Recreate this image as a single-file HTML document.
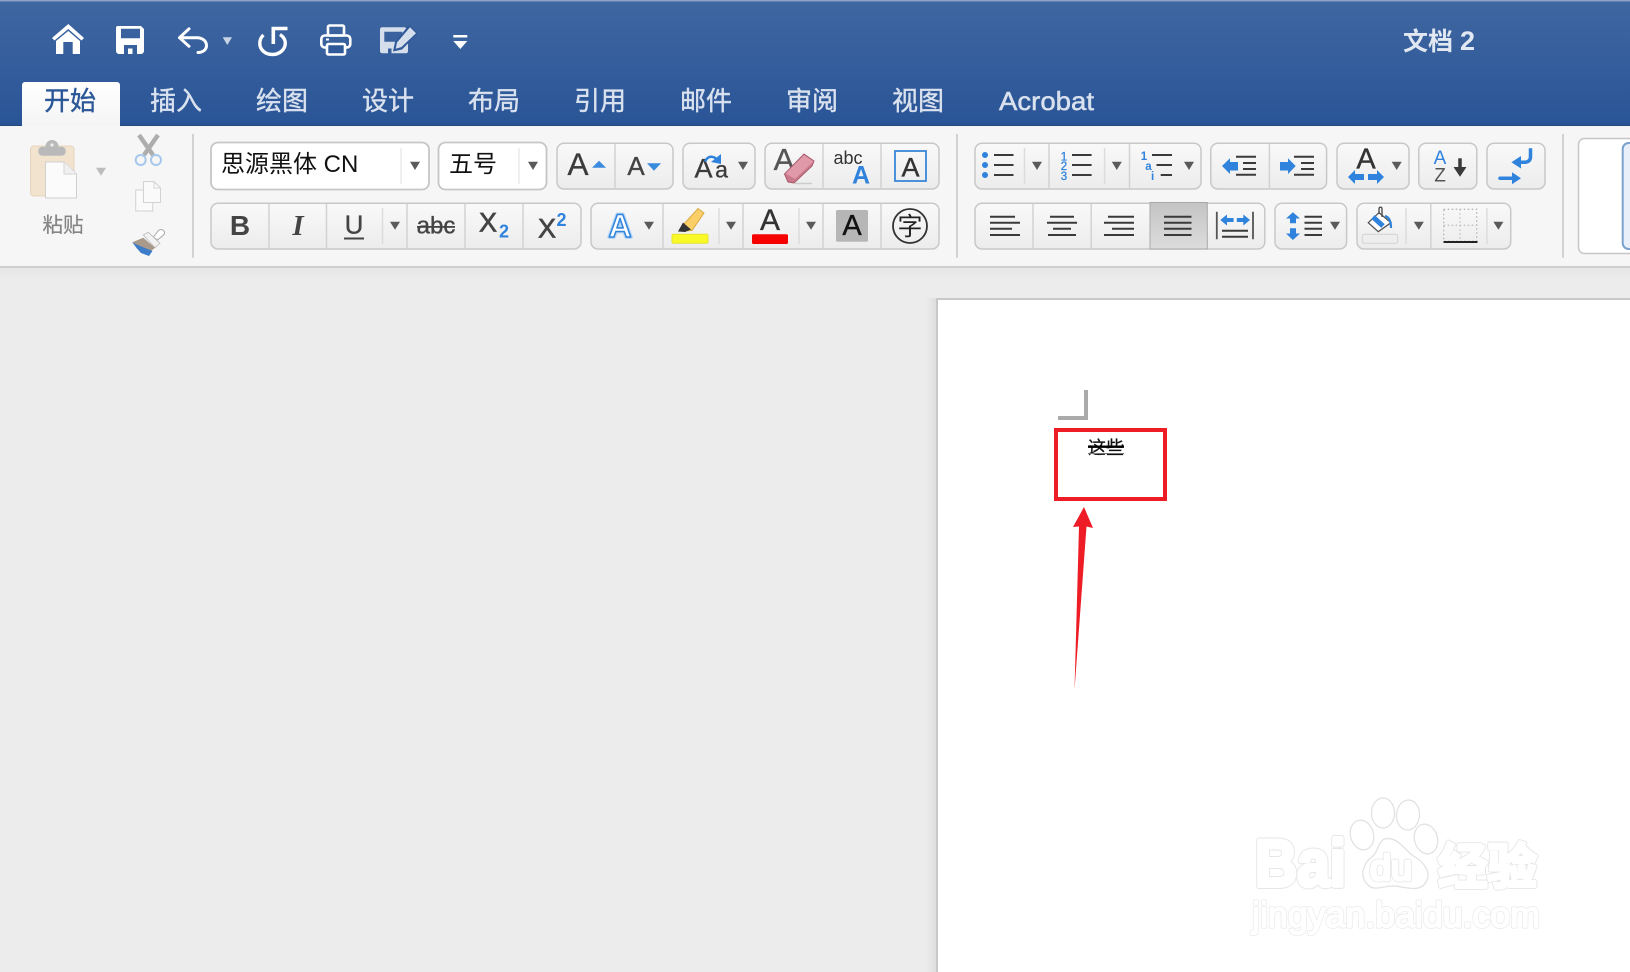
<!DOCTYPE html>
<html lang="zh"><head><meta charset="utf-8"><title>文档2</title>
<style>
html,body{margin:0;padding:0;background:#ececec;width:1630px;height:972px;overflow:hidden}
svg{display:block}
text{font-family:"Liberation Sans","Noto Sans CJK SC",sans-serif}
.m{text-anchor:middle}
.tab{font-size:26px;fill:#d9e1ee;stroke:#d9e1ee;stroke-width:.4;text-anchor:middle}
.g{fill:url(#btn);stroke:#c8c8c8;stroke-width:1.5}
.sep{stroke:#d2d2d2;stroke-width:1.5}
.sh{stroke:#dcdcdc;stroke-width:1.5}
.ssep{stroke:#d2d2d2;stroke-width:2}
.d{fill:#5a5a5a}
.l{stroke:#3a3a3a;stroke-width:2;fill:none}
.b{fill:#2f83dc}
.t{stroke-width:.35}
.wu{fill:#e6e6e6;stroke:#e6e6e6;stroke-linejoin:round}
.wo{fill:#fff;stroke:#fff;stroke-linejoin:round}
</style></head>
<body>
<svg width="1630" height="972" viewBox="0 0 1630 972" xmlns="http://www.w3.org/2000/svg">
<defs>
<linearGradient id="bar" x1="0" y1="0" x2="0" y2="1"><stop offset="0" stop-color="#3f67a1"/><stop offset="1" stop-color="#295496"/></linearGradient>
<linearGradient id="btn" x1="0" y1="0" x2="0" y2="1"><stop offset="0" stop-color="#f9f9f9"/><stop offset="1" stop-color="#ececec"/></linearGradient>
<linearGradient id="act" x1="0" y1="0" x2="0" y2="1"><stop offset="0" stop-color="#c4c4c4"/><stop offset="1" stop-color="#dcdcdc"/></linearGradient>
<linearGradient id="tabg" x1="0" y1="0" x2="0" y2="1"><stop offset="0" stop-color="#fff"/><stop offset="1" stop-color="#f4f4f4"/></linearGradient>
<linearGradient id="sh" x1="0" y1="0" x2="0" y2="1"><stop offset="0" stop-color="#e6e6e6"/><stop offset="1" stop-color="#ececec"/></linearGradient>
<linearGradient id="shl" x1="0" y1="0" x2="1" y2="0"><stop offset="0" stop-color="#ececec"/><stop offset="1" stop-color="#dedede"/></linearGradient>
</defs>

<!-- backgrounds -->
<rect width="1630" height="972" fill="#ececec"/>
<rect width="1630" height="126" fill="url(#bar)"/>
<rect width="1630" height="1.5" fill="#8ba1c7"/>
<rect y="125" width="1630" height="1" fill="#23497f"/>
<rect y="126" width="1630" height="140" fill="#f6f6f6"/>
<rect y="266" width="1630" height="2" fill="#cfcfcf"/>
<rect y="268" width="1630" height="14" fill="url(#sh)"/>

<!-- quick access -->
<g fill="#fff">
<path d="M52 38L68.300 24L84 38L81.500 40.500L68.300 29L54.500 40.500Z"/>
<path d="M56 41L68.300 31L80 41V54H72.700V42H63.300V54H56Z"/>
<path fill-rule="evenodd" d="M118 26H141L144 29V51a3 3 0 0 1-3 3H119a3 3 0 0 1-3-3V28a2 2 0 0 1 2-2ZM121 28.800V38.300H140V28.800ZM124 45V54H137V45ZM128 48.500H132.500V54H128Z"/>
</g>
<path d="M179.500 37.700L189 28.800M179.500 37.700L189 46.300M179.500 37.700H197C203 37.700 206.500 41.500 206.500 45.500C206.500 49.500 203 52.500 198 52.500" fill="none" stroke="#fff" stroke-width="3" stroke-linecap="round" stroke-linejoin="round"/>
<polygon points="222.700,37.300 232,37.300 227.300,45" fill="#c8d4e6"/>
<path d="M263.500 35C260.500 37.500 259.800 41 259.800 43.500C259.800 50 265.500 54.500 272.500 54.500C279.500 54.500 285.300 49.500 285.300 43C285.300 39.500 283 36.500 280 34.500" fill="none" stroke="#fff" stroke-width="3.400"/>
<path d="M273.300 44V28.500H287.500" fill="none" stroke="#fff" stroke-width="3.600"/>
<g fill="none" stroke="#fff" stroke-width="2.600" stroke-linejoin="round">
<rect x="328" y="25.500" width="16" height="10" rx="1.500"/>
<rect x="321.300" y="35.500" width="29" height="12" rx="3.500"/>
<rect x="327" y="44" width="18" height="10.500" rx="1.500" fill="#30599a"/>
</g>
<rect x="326" y="38.500" width="3" height="2" fill="#fff"/>
<path fill-rule="evenodd" fill="#d5deeb" d="M382 27.300H405L408 30V51.300C408 52.500 407 53.300 406 53.300H382C381 53.300 380 52.300 380 51.300V29.300C380 28.300 381 27.300 382 27.300ZM384.300 31.700V41.700H402.300V31.700ZM388 48.500V53.300H391.500V48.500Z"/>
<path fill="#30599a" d="M409 25L418 33.500L402 49.500L393 51.500L395 42Z"/>
<path fill="#d5deeb" d="M410 27.300L416 33.300L401.500 47L395.700 48.800L397 42.500Z"/>
<rect x="453.300" y="35" width="14" height="2.500" fill="#fff"/>
<polygon points="453.300,41 467.300,41 460.300,49" fill="#fff"/>

<!-- tabs -->
<path d="M22 126V85a3 3 0 0 1 3-3H117a3 3 0 0 1 3 3V126Z" fill="url(#tabg)"/>
<text x="70" y="110" class="m" font-size="26" fill="#2b5797" stroke="#2b5797" stroke-width=".4">开始</text>
<text x="176" y="110" class="tab">插入</text>
<text x="282" y="110" class="tab">绘图</text>
<text x="388" y="110" class="tab">设计</text>
<text x="494" y="110" class="tab">布局</text>
<text x="600" y="110" class="tab">引用</text>
<text x="706" y="110" class="tab">邮件</text>
<text x="812" y="110" class="tab">审阅</text>
<text x="918" y="110" class="tab">视图</text>
<text x="999" y="110" font-size="26" fill="#d9e1ee" stroke="#d9e1ee" stroke-width=".5" textLength="95" lengthAdjust="spacingAndGlyphs">Acrobat</text>
<text x="1403" y="50" font-size="25" font-weight="700" fill="#e2e8f2">文档</text><text x="1467.500" y="50" class="m" font-size="27" font-weight="700" fill="#e2e8f2">2</text>

<!-- clipboard group -->
<rect x="30.500" y="146" width="43.500" height="50" rx="3.500" fill="#f2e3cf" stroke="#e5d5bd"/>
<rect x="38.300" y="146.700" width="27.400" height="9" rx="4" fill="#b9b9b9"/>
<circle cx="52" cy="146.500" r="6.500" fill="#b9b9b9"/>
<circle cx="52" cy="145" r="1.600" fill="#efefef"/>
<path d="M45.500 162H64L76.500 174V198H45.500Z" fill="#fbfbfb" stroke="#cfcfcf"/>
<path d="M64 162V174H76.500" fill="#f0f0f0" stroke="#d5d5d5"/>
<polygon points="96,167.700 106,167.700 101,175.700" fill="#bdbdbd"/>
<text x="63" y="232" class="m" font-size="20.500" fill="#858585" stroke="#858585" stroke-width=".2">粘贴</text>
<path d="M139 135L153 155M158 135L144 155" stroke="#adadad" stroke-width="4.500"/>
<circle cx="140.700" cy="160" r="5" fill="none" stroke="#a6c8ec" stroke-width="2"/>
<circle cx="156" cy="160" r="5" fill="none" stroke="#a6c8ec" stroke-width="2"/>
<path d="M135.700 190H144V202.300H152.700V211H135.700Z" fill="#fafafa" stroke="#d2d2d2"/>
<path d="M143.500 181.500H154L160.500 188V202.500H143.500Z" fill="#fafafa" stroke="#d2d2d2"/>
<path d="M154 181.500V188H160.500" fill="none" stroke="#d2d2d2"/>
<path d="M153.500 237L158.500 230.500C160 229 163 229.500 164 231C165 232.500 164.500 234 163.500 235L157.500 240Z" fill="#fff" stroke="#a8a8a8"/>
<path d="M143.300 235L148.300 232.300L160 243.300L155 247.700Z" fill="#f2f2f2" stroke="#bbb" stroke-width=".8"/>
<path d="M132.300 242.300L143.300 237.700L155 247.700L150 252L141 249Z" fill="#a89a8b"/>
<path d="M132.300 242.300C137 245 145 248 152.500 251L149 256L141 253Q136 248 132.300 242.300Z" fill="#3d7cc9"/>
<line x1="193" y1="134" x2="193" y2="257.700" class="ssep"/>

<!-- font selector -->
<rect x="211" y="142.500" width="218" height="47" rx="7" fill="#fff" stroke="#c6c6c6" stroke-width="1.800"/>
<line x1="401" y1="148" x2="401" y2="184" stroke="#e2e2e2"/>
<polygon points="410,161.700 420,161.700 415,170" class="d"/>
<text x="221" y="172" font-size="24" fill="#111">思源黑体 CN</text>
<rect x="438.500" y="142.500" width="108" height="47" rx="7" fill="#fff" stroke="#c6c6c6" stroke-width="1.800"/>
<line x1="519" y1="148" x2="519" y2="184" stroke="#e2e2e2"/>
<polygon points="528,161.700 538,161.700 533,170" class="d"/>
<text x="449" y="172" font-size="24" fill="#111">五号</text>

<!-- row 1 button groups -->
<rect x="557" y="143.300" width="116" height="45.700" rx="7" class="g"/><line x1="615" y1="144" x2="615" y2="189" class="sep"/>
<text x="578" y="175" class="m t" font-size="31.500" fill="#3b3b3b" stroke="#3b3b3b">A</text><polygon points="592,167.700 606,167.700 599,160.700" fill="#3a8ade"/>
<text x="636" y="175" class="m t" font-size="26" fill="#444" stroke="#444">A</text><polygon points="647,163.300 661,163.300 654,170.700" fill="#3a8ade"/>

<rect x="683" y="143.300" width="72" height="45.700" rx="7" class="g"/>
<text x="703.500" y="177.700" class="m t" font-size="27" fill="#3b3b3b" stroke="#3b3b3b">A</text><text x="721.500" y="177.700" class="m t" font-size="23" fill="#3b3b3b" stroke="#3b3b3b">a</text>
<path d="M705 161.500C708 155.500 713 155.500 717 159.500" fill="none" stroke="#2f83dc" stroke-width="2.500"/><polygon points="721,154 721,164 711,162" fill="#2f83dc"/>
<polygon points="738,161.700 748,161.700 743,170" class="d"/>

<rect x="765" y="143.300" width="174" height="45.700" rx="7" class="g"/><line x1="823" y1="144" x2="823" y2="189" class="sep"/><line x1="881" y1="144" x2="881" y2="189" class="sep"/>
<text x="784" y="170" class="m t" font-size="31" fill="#555" stroke="#555">A</text>
<path d="M784.500 174L804 154L814 161L812 166L794 183L788 182Z" fill="#c9798a" stroke="#a85a6c"/><path d="M785.500 173.500L804 155L813.500 161.500L795 179Z" fill="#e099a8"/>
<line x1="795" y1="183.500" x2="812" y2="183.500" stroke="#ccc" stroke-width="1.500"/>
<text x="848" y="164" class="m" font-size="18" fill="#333">abc</text>
<text x="861" y="183.500" class="m" font-size="25" font-weight="700" fill="#2f83dc">A</text>
<rect x="895" y="151" width="31" height="30" fill="none" stroke="#3a87d8" stroke-width="1.800"/>
<text x="910.500" y="176.700" class="m t" font-size="27" fill="#333" stroke="#333">A</text>
<line x1="957" y1="134" x2="957" y2="257.700" class="ssep"/>

<!-- lists -->
<rect x="975" y="143.300" width="226" height="45.700" rx="7" class="g"/>
<line x1="1049" y1="144" x2="1049" y2="189" class="sep"/><line x1="1129.500" y1="144" x2="1129.500" y2="189" class="sep"/>
<line x1="1024.500" y1="148" x2="1024.500" y2="184" class="sh"/><line x1="1104.600" y1="148" x2="1104.600" y2="184" class="sh"/>
<circle cx="985" cy="155" r="3" class="b"/><circle cx="985" cy="165" r="3" class="b"/><circle cx="985" cy="175" r="3" class="b"/>
<path d="M994 155H1013.500M994 165H1013.500M994 175H1013.500" class="l"/>
<polygon points="1032,161.700 1042,161.700 1037,170" class="d"/>
<g class="m" font-size="11.500" fill="#2f83dc" stroke="#2f83dc" stroke-width=".3"><text x="1064" y="160.500">1</text><text x="1064" y="170">2</text><text x="1064" y="180">3</text></g>
<path d="M1072 155H1091.600M1072 165H1091.600M1072 175H1091.600" class="l"/>
<polygon points="1111.800,161.700 1121.800,161.700 1116.800,170" class="d"/>
<g class="m" font-size="11.500" font-weight="700" fill="#2f83dc"><text x="1144" y="160">1</text><text x="1148.400" y="170">a</text><text x="1152.600" y="180">i</text></g>
<path d="M1152 155H1172M1156.500 165H1172M1160.700 175H1172" class="l"/>
<polygon points="1184,161.700 1194,161.700 1189,170" class="d"/>

<rect x="1210.800" y="143.300" width="115.800" height="45.700" rx="7" class="g"/><line x1="1269.400" y1="144" x2="1269.400" y2="189" class="sep"/>
<polygon points="1222,166 1230,158.300 1230,162 1238,162 1238,170.500 1230,170.500 1230,174" class="b"/>
<path d="M1236 156.700H1256M1243 163H1256M1243 169H1256M1236 174.700H1256" class="l"/>
<polygon points="1295.700,166 1288,158.300 1288,162 1280,162 1280,170.500 1288,170.500 1288,174" class="b"/>
<path d="M1294 156.700H1314M1301 163H1314M1301 169H1314M1294 174.700H1314" class="l"/>

<rect x="1337" y="143.300" width="72" height="45.700" rx="7" class="g"/>
<text x="1366" y="168.300" class="m t" font-size="29" fill="#333" stroke="#333">A</text>
<polygon points="1348,177 1355,170 1355,174 1364,174 1364,180 1355,180 1355,184" class="b"/>
<polygon points="1384,177 1377,170 1377,174 1368,174 1368,180 1377,180 1377,184" class="b"/>
<polygon points="1391.700,161.700 1401.700,161.700 1396.700,170" class="d"/>

<rect x="1418.800" y="143.300" width="58" height="45.700" rx="7" class="g"/>
<text x="1440" y="164" class="m" font-size="19" fill="#2f83dc">A</text><text x="1440" y="181.700" class="m" font-size="19" fill="#555">Z</text>
<path d="M1460 158.300V168" stroke="#3a3a3a" stroke-width="3.500"/><polygon points="1453.500,167 1466.500,167 1460,176.700" fill="#3a3a3a"/>

<rect x="1487" y="143.300" width="58" height="45.700" rx="7" class="g"/>
<path d="M1530.500 148.300V157C1530.500 160.500 1528 162.300 1524 162.300H1518" fill="none" stroke="#2f83dc" stroke-width="3.500"/><polygon points="1511.400,162.300 1521,156 1521,168.500" class="b"/>
<path d="M1500 178.300H1514" stroke="#2f83dc" stroke-width="3.500" stroke-linecap="round"/><polygon points="1521,178.300 1512,172.300 1512,184.300" class="b"/>
<line x1="1563" y1="134" x2="1563" y2="257.700" class="ssep"/>

<!-- style gallery -->
<rect x="1578.500" y="138.500" width="80" height="115" rx="6" fill="#fff" stroke="#c6c6c6" stroke-width="1.500"/>
<rect x="1622.700" y="143" width="30" height="106" rx="6" fill="#e8eff8" stroke="#7da2d0" stroke-width="2"/>

<!-- row 2, group 1 -->
<rect x="211" y="203.300" width="370" height="45.700" rx="7" class="g"/>
<line x1="269" y1="204" x2="269" y2="249" class="sep"/><line x1="326.500" y1="204" x2="326.500" y2="249" class="sep"/><line x1="407" y1="204" x2="407" y2="249" class="sep"/><line x1="465" y1="204" x2="465" y2="249" class="sep"/><line x1="523" y1="204" x2="523" y2="249" class="sep"/>
<line x1="382.500" y1="208" x2="382.500" y2="244" class="sh"/>
<text x="240" y="235" class="m" font-size="28" font-weight="700" fill="#444">B</text>
<text x="298" y="235" class="m" font-size="29" font-weight="700" font-style="italic" style="font-family:'Liberation Serif',serif" fill="#444">I</text>
<text x="354" y="233.300" class="m t" font-size="26" fill="#444" stroke="#444">U</text><rect x="344" y="237.500" width="20" height="2" fill="#444"/>
<polygon points="390,221.700 400,221.700 395,229.700" class="d"/>
<text x="436" y="233.300" class="m t" font-size="24" fill="#444" stroke="#444">abc</text><rect x="417" y="226" width="38" height="1.800" fill="#444"/>
<text x="488" y="231.700" class="m" font-size="27" fill="#444" stroke="#444" stroke-width=".7">X</text><text x="504" y="237.300" class="m" font-size="18" font-weight="700" fill="#2f83dc">2</text>
<text x="547" y="237.300" class="m" font-size="27" fill="#444" stroke="#444" stroke-width=".7">X</text><text x="561.500" y="226" class="m" font-size="18" font-weight="700" fill="#2f83dc">2</text>

<!-- row 2, group 2 -->
<rect x="591" y="203.300" width="348" height="45.700" rx="7" class="g"/>
<line x1="663" y1="204" x2="663" y2="249" class="sep"/><line x1="743" y1="204" x2="743" y2="249" class="sep"/><line x1="823" y1="204" x2="823" y2="249" class="sep"/><line x1="881" y1="204" x2="881" y2="249" class="sep"/>
<line x1="719" y1="208" x2="719" y2="244" class="sh"/><line x1="799" y1="208" x2="799" y2="244" class="sh"/>
<text x="620" y="237" class="m" font-size="32" font-weight="700" fill="#fff" stroke="#b4d5f4" stroke-width="4" stroke-linejoin="round">A</text>
<text x="620" y="237" class="m" font-size="32" font-weight="700" fill="#fff" stroke="#2f83dc" stroke-width="1.500" stroke-linejoin="round">A</text>
<polygon points="644,221.700 654,221.700 649,229.700" class="d"/>
<path d="M684 224L698 208.500L704 213L692 230.500L684 231Z" fill="#fbcf68" stroke="#d8a840"/>
<path d="M678 231.500L683 222.500L691 229.500L685 232Z" fill="#333"/>
<rect x="672" y="234.300" width="36" height="9" rx="1.500" fill="#f9f928" stroke="#e3e330"/>
<polygon points="726,221.700 736,221.700 731,229.700" class="d"/>
<text x="770" y="230" class="m t" font-size="30" fill="#333" stroke="#333">A</text><rect x="752" y="234.300" width="36" height="9.700" rx="1.500" fill="#f60000"/>
<polygon points="806,221.700 816,221.700 811,229.700" class="d"/>
<rect x="836" y="210" width="32" height="31.700" rx="1.500" fill="#b6b6b6"/><text x="852" y="235" class="m t" font-size="29" fill="#111" stroke="#111">A</text>
<circle cx="910" cy="226" r="17" fill="none" stroke="#333" stroke-width="1.800"/><text x="910" y="235" class="m" font-size="25" fill="#222">字</text>

<!-- align -->
<rect x="975" y="203.300" width="289.800" height="45.700" rx="7" class="g"/>
<rect x="1150" y="202.500" width="57.300" height="46.500" fill="url(#act)" stroke="#a8a8a8"/>
<line x1="1033" y1="204" x2="1033" y2="249" class="sep"/><line x1="1091.200" y1="204" x2="1091.200" y2="249" class="sep"/>
<path d="M990 216.700H1015M990 222.700H1020M990 228.700H1012M990 235H1020" class="l"/>
<path d="M1050 216.700H1074M1047 222.700H1077M1053 228.700H1071M1048 235H1076" class="l"/>
<path d="M1108 216.700H1134M1104 222.700H1134M1112 228.700H1134M1104 235H1134" class="l"/>
<path d="M1164 216.700H1191.500M1164 222.700H1191.500M1164 228.700H1191.500M1164 235H1191.500" class="l"/>
<path d="M1216.800 211.700V239.300M1253 211.700V239.300" stroke="#555" stroke-width="1.800"/>
<polygon points="1220.300,220 1227,214.500 1227,218 1233.600,218 1233.600,222 1227,222 1227,225.500" class="b"/>
<polygon points="1250,220 1243.300,214.500 1243.300,218 1236.800,218 1236.800,222 1243.300,222 1243.300,225.500" class="b"/>
<path d="M1222 230.700H1248M1222 236.700H1248" class="l"/>

<rect x="1275" y="203.300" width="71.600" height="45.700" rx="7" class="g"/>
<polygon points="1292.900,212.300 1300,218.500 1296,218.500 1296,223.300 1290,223.300 1290,218.500 1286,218.500" class="b"/>
<polygon points="1292.900,240 1300,233.500 1296,233.500 1296,228.300 1290,228.300 1290,233.500 1286,233.500" class="b"/>
<path d="M1304.500 216.700H1322M1304.500 222.700H1322M1304.500 228.700H1322M1304.500 235H1322" class="l"/>
<polygon points="1330,221.700 1340,221.700 1335,229.700" class="d"/>

<rect x="1357" y="203.300" width="153.700" height="45.700" rx="7" class="g"/>
<line x1="1430.800" y1="204" x2="1430.800" y2="249" class="sep"/>
<line x1="1406" y1="208" x2="1406" y2="244" class="sh"/><line x1="1486.900" y1="208" x2="1486.900" y2="244" class="sh"/>
<path d="M1368.300 222.700L1379 212.700L1391 222.700L1378.300 231.700Z" fill="#fff" stroke="#555" stroke-width="1.300"/>
<path d="M1373 217L1383 226" stroke="#2f83dc" stroke-width="5"/>
<path d="M1379 214V209C1379 206.500 1382 206.500 1382 209V217" fill="none" stroke="#444" stroke-width="1.300"/>
<path d="M1385 216C1389 217 1391 221 1391 228" fill="none" stroke="#2f83dc" stroke-width="2.200"/>
<rect x="1362.300" y="234.300" width="35.400" height="9" rx="2" fill="#eee" stroke="#d2d2d2"/>
<polygon points="1413.800,221.700 1423.800,221.700 1418.800,229.700" class="d"/>
<rect x="1443.700" y="209.300" width="33" height="32" fill="none" stroke="#b4b4b4" stroke-dasharray="1.500 2.500" stroke-width="1.300"/>
<path d="M1460 209.300V241M1443.700 225.300H1477" fill="none" stroke="#c0c0c0" stroke-dasharray="1.500 2.500" stroke-width="1.300"/>
<rect x="1443.500" y="241" width="34" height="2" fill="#222"/>
<polygon points="1493.400,221.700 1503.400,221.700 1498.400,229.700" class="d"/>

<!-- document area -->
<rect x="926" y="298" width="10" height="674" fill="url(#shl)"/>
<rect x="936" y="298" width="694" height="674" fill="#fff"/>
<rect x="936" y="298" width="694" height="2" fill="#c8c8c8"/>
<rect x="936" y="298" width="2" height="674" fill="#c8c8c8"/>
<path d="M1086 390V418H1058" fill="none" stroke="#aaa" stroke-width="4"/>
<text x="1106" y="454" class="m" font-size="18" fill="#111" stroke="#111" stroke-width=".25">这些</text>
<rect x="1088" y="445.500" width="36" height="2.400" fill="#000"/>
<rect x="1088" y="453" width="36" height="1" fill="#777"/>
<rect x="1056" y="430" width="109" height="69" fill="none" stroke="#ee1c25" stroke-width="4"/>
<polygon points="1084,507 1093,528 1086.500,526.500 1074.500,690 1079,526.500 1073,527" fill="#ee1c25"/>

<!-- watermark -->
<g fill="#fff" stroke="#e2e2e2" stroke-width="1.300">
<ellipse cx="1383" cy="813" rx="11.500" ry="15"/>
<ellipse cx="1408" cy="815" rx="11.500" ry="15" transform="rotate(5 1408 815)"/>
<ellipse cx="1362" cy="835" rx="11.500" ry="15" transform="rotate(-15 1362 835)"/>
<ellipse cx="1426" cy="839" rx="11.500" ry="15" transform="rotate(-15 1426 839)"/>
<path d="M1384 839C1397 836 1403 848 1412 855C1424 862 1432 872 1426 882C1421 891 1411 889 1396 886C1384 885 1375 892 1368 885C1358 876 1364 862 1373 856C1378 851 1378 843 1384 839Z"/>
</g>
<g font-size="66" font-weight="700">
<text x="1255" y="886" textLength="91" lengthAdjust="spacingAndGlyphs" class="wu" stroke-width="6">Bai</text>
<text x="1255" y="886" textLength="91" lengthAdjust="spacingAndGlyphs" class="wo" stroke-width="4">Bai</text>
</g>
<g font-size="36">
<text x="1370" y="880" textLength="42" lengthAdjust="spacingAndGlyphs" class="wu" stroke-width="4.500">du</text>
<text x="1370" y="880" textLength="42" lengthAdjust="spacingAndGlyphs" class="wo" stroke-width="3">du</text>
</g>
<g font-size="49" font-weight="700">
<text x="1438" y="884" textLength="99" lengthAdjust="spacingAndGlyphs" class="wu" stroke-width="5">经验</text>
<text x="1438" y="884" textLength="99" lengthAdjust="spacingAndGlyphs" class="wo" stroke-width="3.200">经验</text>
</g>
<g font-size="36">
<text x="1252" y="927" textLength="288" lengthAdjust="spacingAndGlyphs" class="wu" stroke-width="3">jingyan.baidu.com</text>
<text x="1252" y="927" textLength="288" lengthAdjust="spacingAndGlyphs" class="wo" stroke-width="1.800">jingyan.baidu.com</text>
</g>
</svg>
</body></html>
